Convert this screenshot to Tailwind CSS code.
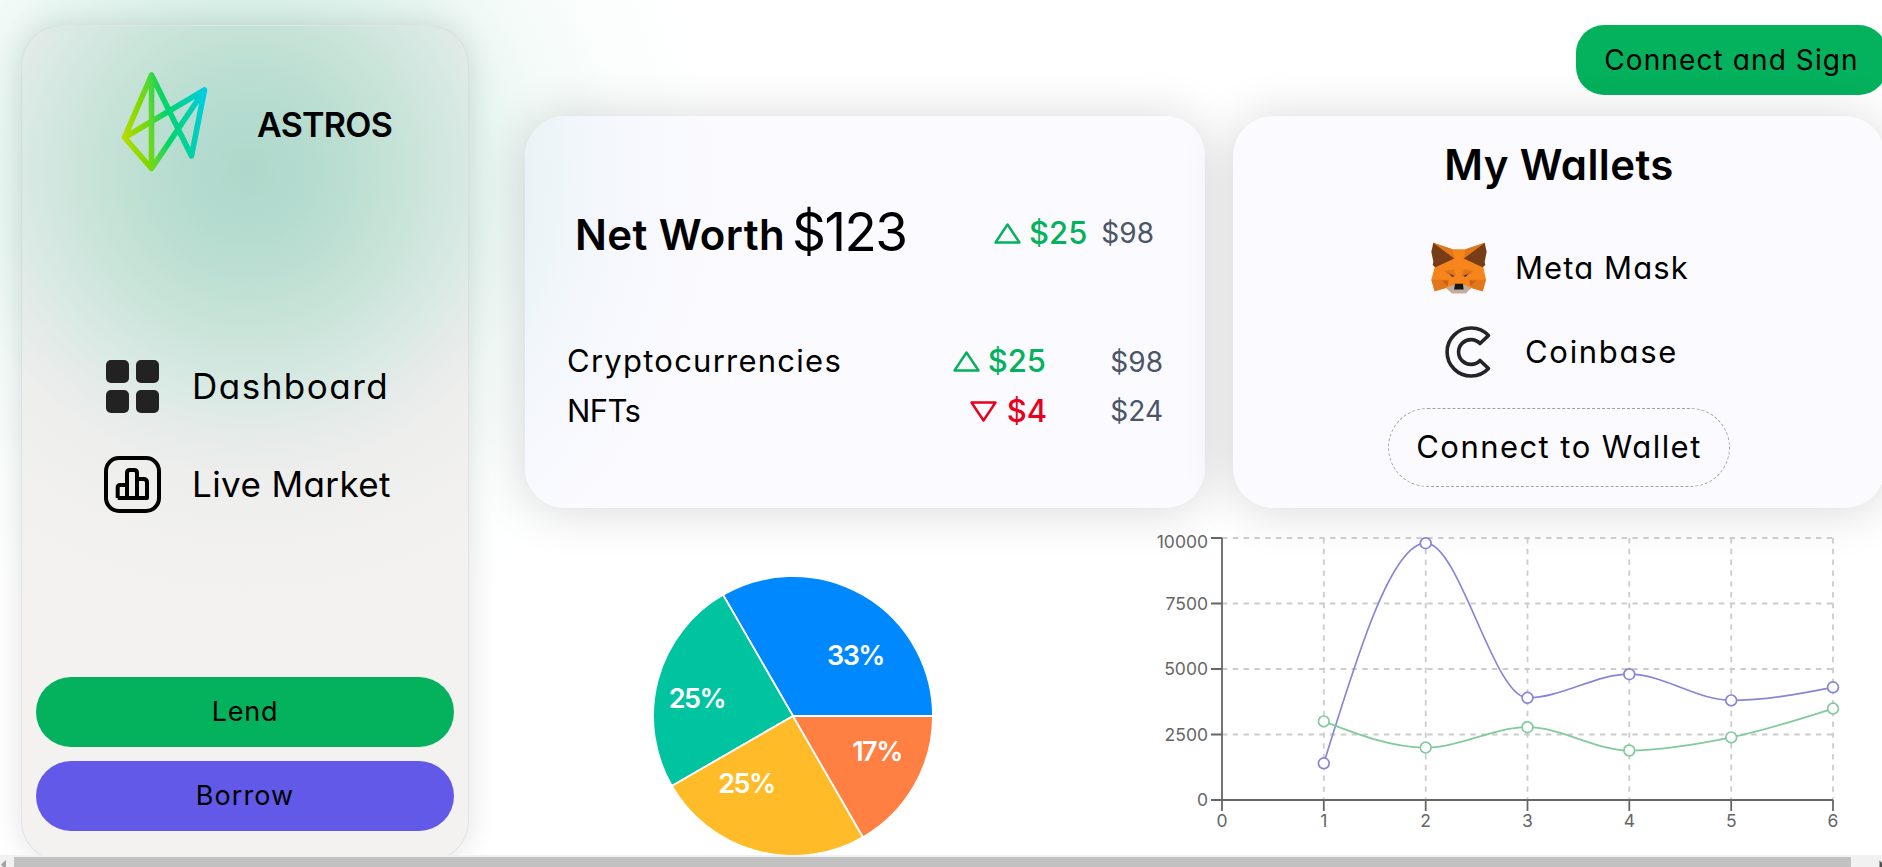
<!DOCTYPE html>
<html lang="en">
<head>
<meta charset="utf-8">
<title>Astros</title>
<script src="https://cdn.jsdelivr.net/npm/@tailwindcss/browser@4"></script>
</head>
<body class="h-[867px] w-[1882px] overflow-hidden bg-white font-['Inter',sans-serif] text-black [font-feature-settings:'cv11']">
<div class="flex h-[867px] w-[1882px] flex-col overflow-hidden">
  <div class="flex h-[855px] w-[1882px] overflow-hidden bg-[radial-gradient(circle_at_245px_175px,#cdeae0_100px,#d9f0e8_175px,#e6f5f0_240px,#f3faf8_300px,#fbfefd_390px,#ffffff_480px)]">

    <!-- Sidebar -->
    <aside class="ml-[21px] mt-[25px] flex h-[836px] w-[448px] shrink-0 flex-col rounded-[40px] border border-slate-300/50 bg-[radial-gradient(circle_at_226px_145px,#aed8cb_0px,#b6dcd0_70px,#c0e0d4_120px,#cae4da_165px,#d8e9e3_220px,#e4ebe8_260px,#eeeeed_310px,#f3f2f0_430px)] px-3.5 shadow-[0_0_30px_rgba(0,0,0,0.12)]">
      <div class="flex h-[192px] items-center pl-[85px]">
        <svg class="h-[102px] w-[88px]" viewBox="0 0 88 102" fill="none" stroke="url(#lg)" stroke-width="5.600" stroke-linejoin="round">
          <defs><linearGradient id="lg" gradientUnits="userSpaceOnUse" x1="2" y1="60" x2="86" y2="50"><stop stop-color="#b5db00"/><stop offset=".25" stop-color="#7dd800"/><stop offset=".34" stop-color="#5fd72e"/><stop offset=".52" stop-color="#00d565"/><stop offset="1" stop-color="#00cde0"/></linearGradient></defs>
          <path d="M30.500 4 3.500 66.500 30.500 97.500 83.500 19 70.500 85 30.500 4V97.500M3.500 66.500 83.500 19"/>
        </svg>
        <h1 class="ml-[48px] mt-1 text-[34px] font-semibold tracking-[-0.7px]">ASTROS</h1>
      </div>
      <nav class="mt-[132px] flex flex-col gap-[26px] pl-[68px]">
        <a class="flex h-[72px] items-center gap-[31px]">
          <svg class="size-[57px]" viewBox="0 0 57 57" fill="#222"><rect x="2" y="2" width="23" height="23" rx="5"/><rect x="32" y="2" width="23" height="23" rx="5"/><rect x="2" y="32" width="23" height="23" rx="5"/><rect x="32" y="32" width="23" height="23" rx="5"/></svg>
          <span class="text-[35px] tracking-[1.5px]">Dashboard</span>
        </a>
        <a class="flex h-[72px] items-center gap-[31px]">
          <svg class="size-[57px]" viewBox="0 0 57 57" fill="none" stroke="#000" stroke-width="4" stroke-linejoin="round"><rect x="2" y="2" width="53" height="53" rx="13"/><path d="M13.7 42V31.5Q13.7 29 16.2 29H23M23 42V17Q23 14 26 14H30Q33 14 33 17V42M33 23H39.5Q43 23 43 26.500V42H13.700"/></svg>
          <span class="text-[35px] tracking-[0.4px]">Live Market</span>
        </a>
      </nav>
      <div class="mt-[157px] flex flex-col gap-3.5">
        <button class="h-[70px] rounded-[35px] bg-[#04b15c] text-[27px] tracking-[0.8px]">Lend</button>
        <button class="h-[70px] rounded-[35px] bg-[#6259e8] text-[27px] tracking-[1.1px]">Borrow</button>
      </div>
    </aside>

    <main class="ml-14 flex w-[1362px] shrink-0 flex-col">
      <header class="flex h-[116px] justify-end pt-[25px]">
        <button class="h-[70px] w-[311px] rounded-[28px] bg-[#04b15c] text-[28px] tracking-[1.1px]">Connect and Sign</button>
      </header>

      <section class="flex h-[392px] gap-7">
        <!-- Net worth -->
        <div class="w-[680px] rounded-[40px] bg-[radial-gradient(circle_at_-280px_60px,#e9f3f5_280px,#f3f7fb_350px,#f8f9fe_420px,#fbfaff_500px)] shadow-[0_2px_50px_rgba(0,0,0,0.16)]">
          <div class="mt-[77px] flex h-20 items-center pl-[50px] pr-[51px]">
            <span class="pt-0.5 text-[42px] font-semibold tracking-[0.4px]">Net Worth</span>
            <span class="ml-[7px] text-[53px] tracking-[-1.6px]">$123</span>
            <span class="ml-auto flex items-center gap-2 text-[31px] font-medium text-[#04b15c]">
              <svg class="h-[21px] w-[27px]" viewBox="0 0 27 21" fill="none" stroke="currentColor" stroke-width="2.400" stroke-linejoin="round"><path d="M13.500 1.500 25.500 19.500H1.500Z"/></svg>$25</span>
            <span class="ml-3.5 text-[28px] text-gray-600">$98</span>
          </div>
          <div class="mt-[64px] flex flex-col pl-[42px] pr-[42px]">
            <div class="flex h-[49px] items-center text-[31px]">
              <span class="flex-1 tracking-[1.25px]">Cryptocurrencies</span>
              <span class="flex items-center gap-2 font-medium text-[#04b15c]">
                <svg class="h-[21px] w-[27px]" viewBox="0 0 27 21" fill="none" stroke="currentColor" stroke-width="2.400" stroke-linejoin="round"><path d="M13.500 1.500 25.500 19.500H1.500Z"/></svg>$25</span>
              <span class="w-[117px] text-right text-[28px] text-gray-600">$98</span>
            </div>
            <div class="flex h-[49px] items-center text-[31px]">
              <span class="flex-1 pt-0.5 tracking-[-0.6px]">NFTs</span>
              <span class="flex items-center gap-2.5 pt-0.5 font-medium text-[#e8001c]">
                <svg class="h-[21px] w-[27px]" viewBox="0 0 27 21" fill="none" stroke="currentColor" stroke-width="2.400" stroke-linejoin="round"><path d="M13.500 19.500 25.500 1.500H1.500Z"/></svg>$4</span>
              <span class="w-[116px] text-right text-[28px] text-gray-600">$24</span>
            </div>
          </div>
        </div>

        <!-- Wallets -->
        <div class="flex w-[652px] flex-col items-center rounded-[40px] bg-[#fbfaff] shadow-[0_2px_50px_rgba(0,0,0,0.16)]">
          <h2 class="mt-[19px] text-[42px] font-semibold leading-[60px] tracking-[0.4px]">My Wallets</h2>
          <div class="mt-[31px] flex h-[84px] w-[256px] items-center gap-[28px] whitespace-nowrap text-[31px]">
            <svg class="h-[52px] w-[56px] shrink-0" viewBox="18 20 168 158">
              <path fill="#f6851b" d="M24 22 82 42H122L180 22 176 97 184 135 174 170 140 160 118 176H82L62 160 28 170 18 135 28 97Z"/>
              <path fill="#763d16" d="M24 22 88 70 30 97 22 90 24 80 18 50ZM180 22 116 70 174 97 182 90 180 80 186 50Z"/>
              <path fill="#e2761b" d="M24 22 82 42 88 70ZM180 22 122 42 116 70ZM18 135H66L62 160 28 170ZM184 135H138L140 160 174 170ZM58 108 85 103 94 123 68 118ZM144 108 118 103 109 123 136 118Z"/>
              <path fill="#cd6116" d="M50 138 70 136 68 155ZM153 138 134 136 136 155ZM58 108 94 123 74 118ZM144 108 109 123 130 118Z"/>
              <path fill="#233447" d="M73 117 88 123 81 126ZM130 117 115 123 122 126Z"/>
              <path fill="#c0ad9e" d="M64 158 88 150H116L138 158 124 176H80Z"/>
              <path fill="#161616" d="M90 147H114L116 164H87Z"/>
            </svg>
            <span class="tracking-[1.1px]">Meta Mask</span>
          </div>
          <div class="flex h-[84px] w-[232px] items-center gap-[32px] text-[31px]">
            <svg class="h-[56px] w-[50px] shrink-0" viewBox="-28 -28 50 56" fill="none" stroke="#242424" stroke-width="3.600" stroke-linejoin="round"><path d="M17.500-16.500A24 24 0 1 0 17.500 16.500L9 8.500A12.400 12.400 0 1 1 9-8.500Z"/></svg>
            <span class="tracking-[1.7px]">Coinbase</span>
          </div>
          <button class="mt-3.5 h-[79px] w-[342px] whitespace-nowrap rounded-[40px] border border-dashed border-gray-400 text-[31px] tracking-[1.45px]">Connect to Wallet</button>
        </div>
      </section>

      <section class="flex h-[347px]">
        <svg class="h-[347px] w-[600px]" viewBox="525 508 600 347" stroke="#fff" stroke-width="1.800" stroke-linejoin="round">
          <path fill="#0088fe" d="M793 716H933A140 140 0 0 0 723 594.800Z"/>
          <path fill="#00c49f" d="M793 716 723 594.800A140 140 0 0 0 671.800 786Z"/>
          <path fill="#ffbb28" d="M793 716 671.800 786A140 140 0 0 0 863 837.200Z"/>
          <path fill="#ff8042" d="M793 716 863 837.200A140 140 0 0 0 933 716Z"/>
          <g fill="#fff" stroke="none" font-size="27" font-weight="600" letter-spacing="-1.500" text-anchor="middle">
            <text x="855.500" y="665">33%</text><text x="697" y="708">25%</text><text x="746.500" y="793">25%</text><text x="877" y="761">17%</text>
          </g>
        </svg>
        <svg class="h-[347px] w-[757px]" viewBox="1125 508 757 347" fill="none">
          <g stroke="#ccc" stroke-width="1.800" stroke-dasharray="5.400 5.400">
            <path d="M1222 538H1833M1222 603.500H1833M1222 669H1833M1222 734.500H1833"/>
            <path d="M1323.800 538V800M1425.700 538V800M1527.500 538V800M1629.300 538V800M1731.200 538V800M1833 538V800"/>
          </g>
          <path stroke="#666" stroke-width="1.800" d="M1222 538V811M1211 800H1833M1211 538H1222M1211 603.500H1222M1211 669H1222M1211 734.500H1222M1323.800 800V811M1425.700 800V811M1527.500 800V811M1629.300 800V811M1731.200 800V811M1833 800V811"/>
          <g fill="#666" font-size="17.500" text-anchor="end">
            <text x="1208" y="548">10000</text><text x="1208" y="610">7500</text><text x="1208" y="675">5000</text><text x="1208" y="741">2500</text><text x="1208" y="806">0</text>
          </g>
          <g fill="#666" font-size="17.500" text-anchor="middle">
            <text x="1222" y="827">0</text><text x="1323.800" y="827">1</text><text x="1425.700" y="827">2</text><text x="1527.500" y="827">3</text><text x="1629.300" y="827">4</text><text x="1731.200" y="827">5</text><text x="1833" y="827">6</text>
          </g>
          <g stroke="#8884d8" stroke-width="1.700">
            <path d="M1323.800 763.300C1357.700 653.200 1391.800 543.200 1425.700 543.200S1493.600 697.800 1527.500 697.800 1595.400 674.200 1629.300 674.200 1697.300 700.400 1731.200 700.400 1799.100 693.900 1833 687.300"/>
            <g fill="#fff"><circle cx="1323.800" cy="763.300" r="5.400"/><circle cx="1425.700" cy="543.200" r="5.400"/><circle cx="1527.500" cy="697.800" r="5.400"/><circle cx="1629.300" cy="674.200" r="5.400"/><circle cx="1731.200" cy="700.400" r="5.400"/><circle cx="1833" cy="687.300" r="5.400"/></g>
          </g>
          <g stroke="#82ca9d" stroke-width="1.700">
            <path d="M1323.800 721.400C1357.700 734.500 1391.800 747.600 1425.700 747.600S1493.600 727.200 1527.500 727.200 1595.400 750.500 1629.300 750.500 1697.300 744.400 1731.200 737.400 1799.100 719.500 1833 708.600"/>
            <g fill="#fff"><circle cx="1323.800" cy="721.400" r="5.400"/><circle cx="1425.700" cy="747.600" r="5.400"/><circle cx="1527.500" cy="727.200" r="5.400"/><circle cx="1629.300" cy="750.500" r="5.400"/><circle cx="1731.200" cy="737.400" r="5.400"/><circle cx="1833" cy="708.600" r="5.400"/></g>
          </g>
        </svg>
      </section>
    </main>
  </div>

  <!-- Horizontal scrollbar -->
  <div class="flex h-3 w-[1882px] justify-between bg-[#f1f1f1]">
    <svg class="h-3 w-3.5" viewBox="0 0 14 12" fill="#a3a3a3"><path d="M1 9.500 6 5V12H3Z"/></svg>
    <div class="mt-0.5 h-2.5 w-[1837px] bg-[#c1c1c1]"></div>
    <svg class="h-3 w-[31px]" viewBox="0 0 31 12" fill="#505050"><path d="M28.500 5.500 31 8V12H28.500Z"/></svg>
  </div>
</div>
</body>
</html>
